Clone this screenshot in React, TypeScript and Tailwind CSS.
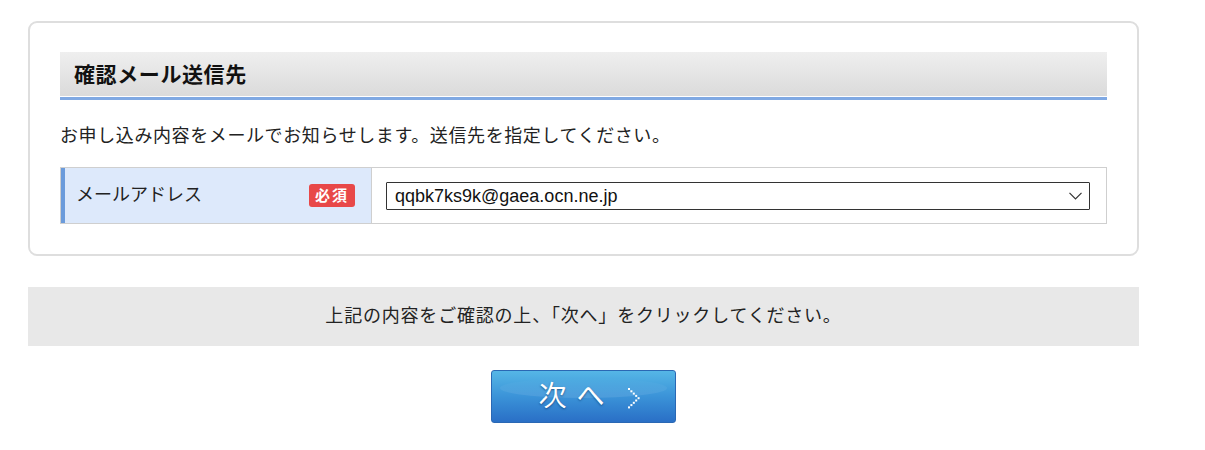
import { useState } from 'react'

const jp = 'font-["Liberation_Sans","Noto_Sans_CJK_JP",sans-serif]'

function RequiredBadge() {
  return (
    <span className="inline-flex h-[23px] w-[46px] items-center justify-center rounded-[3px] bg-[#e84848] text-[15px] font-bold leading-none tracking-[2px] text-white">
      必須
    </span>
  )
}

function NextButton() {
  return (
    <button
      type="button"
      className="relative flex h-[53px] w-[185px] items-center justify-center overflow-hidden rounded-[3px] border border-[#2a68b4] bg-gradient-to-b from-[#55b6e6] via-[#3b93d8] to-[#2a6fc6] pl-[12px]"
    >
      {/* glossy highlight */}
      <span className="absolute left-[8px] right-[8px] top-[7px] h-[20px] rounded-[50%] bg-gradient-to-b from-white/0 to-white/10" />
      <span className="relative flex items-center text-[28px] leading-none text-white [text-shadow:0_1px_2px_rgba(0,40,90,0.6)]">
        <span className="tracking-[10px]">次へ</span>
        <svg width="14" height="22" viewBox="0 0 14 22" className="ml-[12px] mt-[3px]">
          {[0, 1, 2, 3, 4, 5, 6, 7, 8].map((i) => {
            const y = i * 2.3
            const x = i <= 4 ? i * 2.4 : (8 - i) * 2.4
            return <rect key={i} x={x + 1} y={y + 1} width="2" height="2" fill="#fff" />
          })}
        </svg>
      </span>
    </button>
  )
}

export default function App() {
  const [email, setEmail] = useState('qqbk7ks9k@gaea.ocn.ne.jp')

  return (
    <div className={`${jp} bg-white pb-[27px] pt-[21px] text-[#222]`}>
      <div className="ml-[28px] w-[1111px]">
        <section className="rounded-[9px] border-2 border-[#dedede] px-[30px] pb-[30px] pt-[29px]">
          <h2 className="flex h-[48px] items-center border-b-[3px] border-[#80a9e3] bg-gradient-to-b from-[#efefef] to-[#dadada] pl-[14px] text-[21px] font-bold tracking-[0.6px] text-[#111] shadow-[inset_0_-1px_0_#fff]">
            確認メール送信先
          </h2>
          <p className="mt-[23px] text-[18px] leading-[26px] tracking-[0.6px] text-[#222]">
            お申し込み内容をメールでお知らせします。送信先を指定してください。
          </p>
          <div className="mt-[18px] flex h-[57px] border border-[#cfcfcf]">
            <div className="flex w-[310px] items-center justify-between border-l-4 border-[#6b9bdb] bg-[#dde9fb] pl-[11px] pr-[16px]">
              <span className="text-[18px] text-[#222]">メールアドレス</span>
              <RequiredBadge />
            </div>
            <div className="flex flex-1 items-center border-l border-[#cfcfcf] pl-[14px] pr-[16px]">
              <div className="relative h-[28px] w-full">
                <select
                  value={email}
                  onChange={(e) => setEmail(e.target.value)}
                  className="h-full w-full appearance-none rounded-[1px] border border-[#333] bg-white pl-[8px] text-[18px] text-[#111] outline-none"
                >
                  <option value="qqbk7ks9k@gaea.ocn.ne.jp">qqbk7ks9k@gaea.ocn.ne.jp</option>
                </select>
                <svg
                  width="13"
                  height="8"
                  viewBox="0 0 13 8"
                  className="pointer-events-none absolute right-[8px] top-[10px]"
                >
                  <path d="M0.5 0.8 L6.5 6.8 L12.5 0.8" fill="none" stroke="#333" strokeWidth="1.2" />
                </svg>
              </div>
            </div>
          </div>
        </section>

        <div className="mt-[31px] flex h-[59px] items-center justify-center bg-[#e8e8e8] text-[18px] tracking-[0.8px] text-[#222]">
          上記の内容をご確認の上、「次へ」をクリックしてください。
        </div>

        <div className="mt-[24px] flex justify-center">
          <NextButton />
        </div>
      </div>
    </div>
  )
}
